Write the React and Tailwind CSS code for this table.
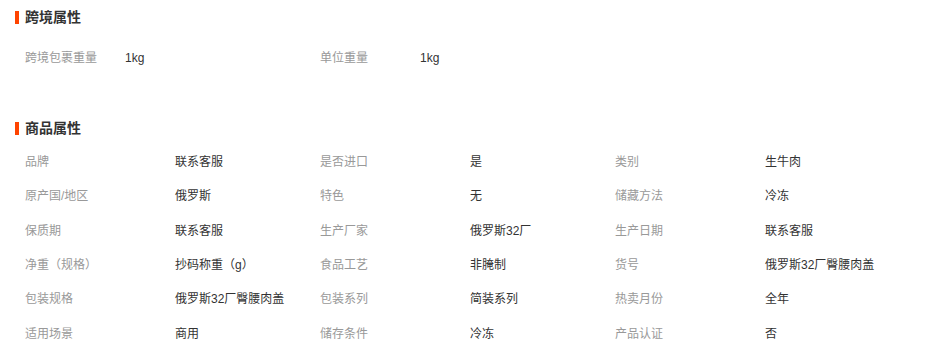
const cross = [
  ['跨境包裹重量', '1kg'],
  ['单位重量', '1kg'],
];

const attrs = [
  ['品牌', '联系客服'], ['是否进口', '是'], ['类别', '生牛肉'],
  ['原产国/地区', '俄罗斯'], ['特色', '无'], ['储藏方法', '冷冻'],
  ['保质期', '联系客服'], ['生产厂家', '俄罗斯32厂'], ['生产日期', '联系客服'],
  ['净重（规格）', '抄码称重（g）'], ['食品工艺', '非腌制'], ['货号', '俄罗斯32厂臀腰肉盖'],
  ['包装规格', '俄罗斯32厂臀腰肉盖'], ['包装系列', '简装系列'], ['热卖月份', '全年'],
  ['适用场景', '商用'], ['储存条件', '冷冻'], ['产品认证', '否'],
];

function Title({ children }) {
  return (
    <div className="flex items-center h-5 pl-[15px]">
      <span className="w-[4px] h-[13px] bg-[#ff4400] mr-[6px]" />
      <h3 className="text-[14px] font-bold text-[#333]">{children}</h3>
    </div>
  );
}

export default function App() {
  return (
    <div
      className="w-[926px] h-[363px] bg-white pt-[7px] text-[12px] overflow-hidden"
      style={{ fontFamily: '"Liberation Sans", "Noto Sans CJK SC", sans-serif' }}
    >
      <Title>跨境属性</Title>
      <div className="grid grid-cols-[295px_295px] pl-[25px] mt-[14px]">
        {cross.map(([k, v]) => (
          <div key={k} className="flex items-center h-[34px]">
            <span className="w-[100px] text-[#999]">{k}</span>
            <span className="text-[#333]">{v}</span>
          </div>
        ))}
      </div>

      <div className="mt-[43px]">
        <Title>商品属性</Title>
      </div>
      <div className="grid grid-cols-[295px_295px_295px] pl-[25px] mt-[7px]">
        {attrs.map(([k, v]) => (
          <div key={k} className="flex items-center h-[34.3px]">
            <span className="w-[150px] text-[#999]">{k}</span>
            <span className="text-[#333]">{v}</span>
          </div>
        ))}
      </div>
    </div>
  );
}
